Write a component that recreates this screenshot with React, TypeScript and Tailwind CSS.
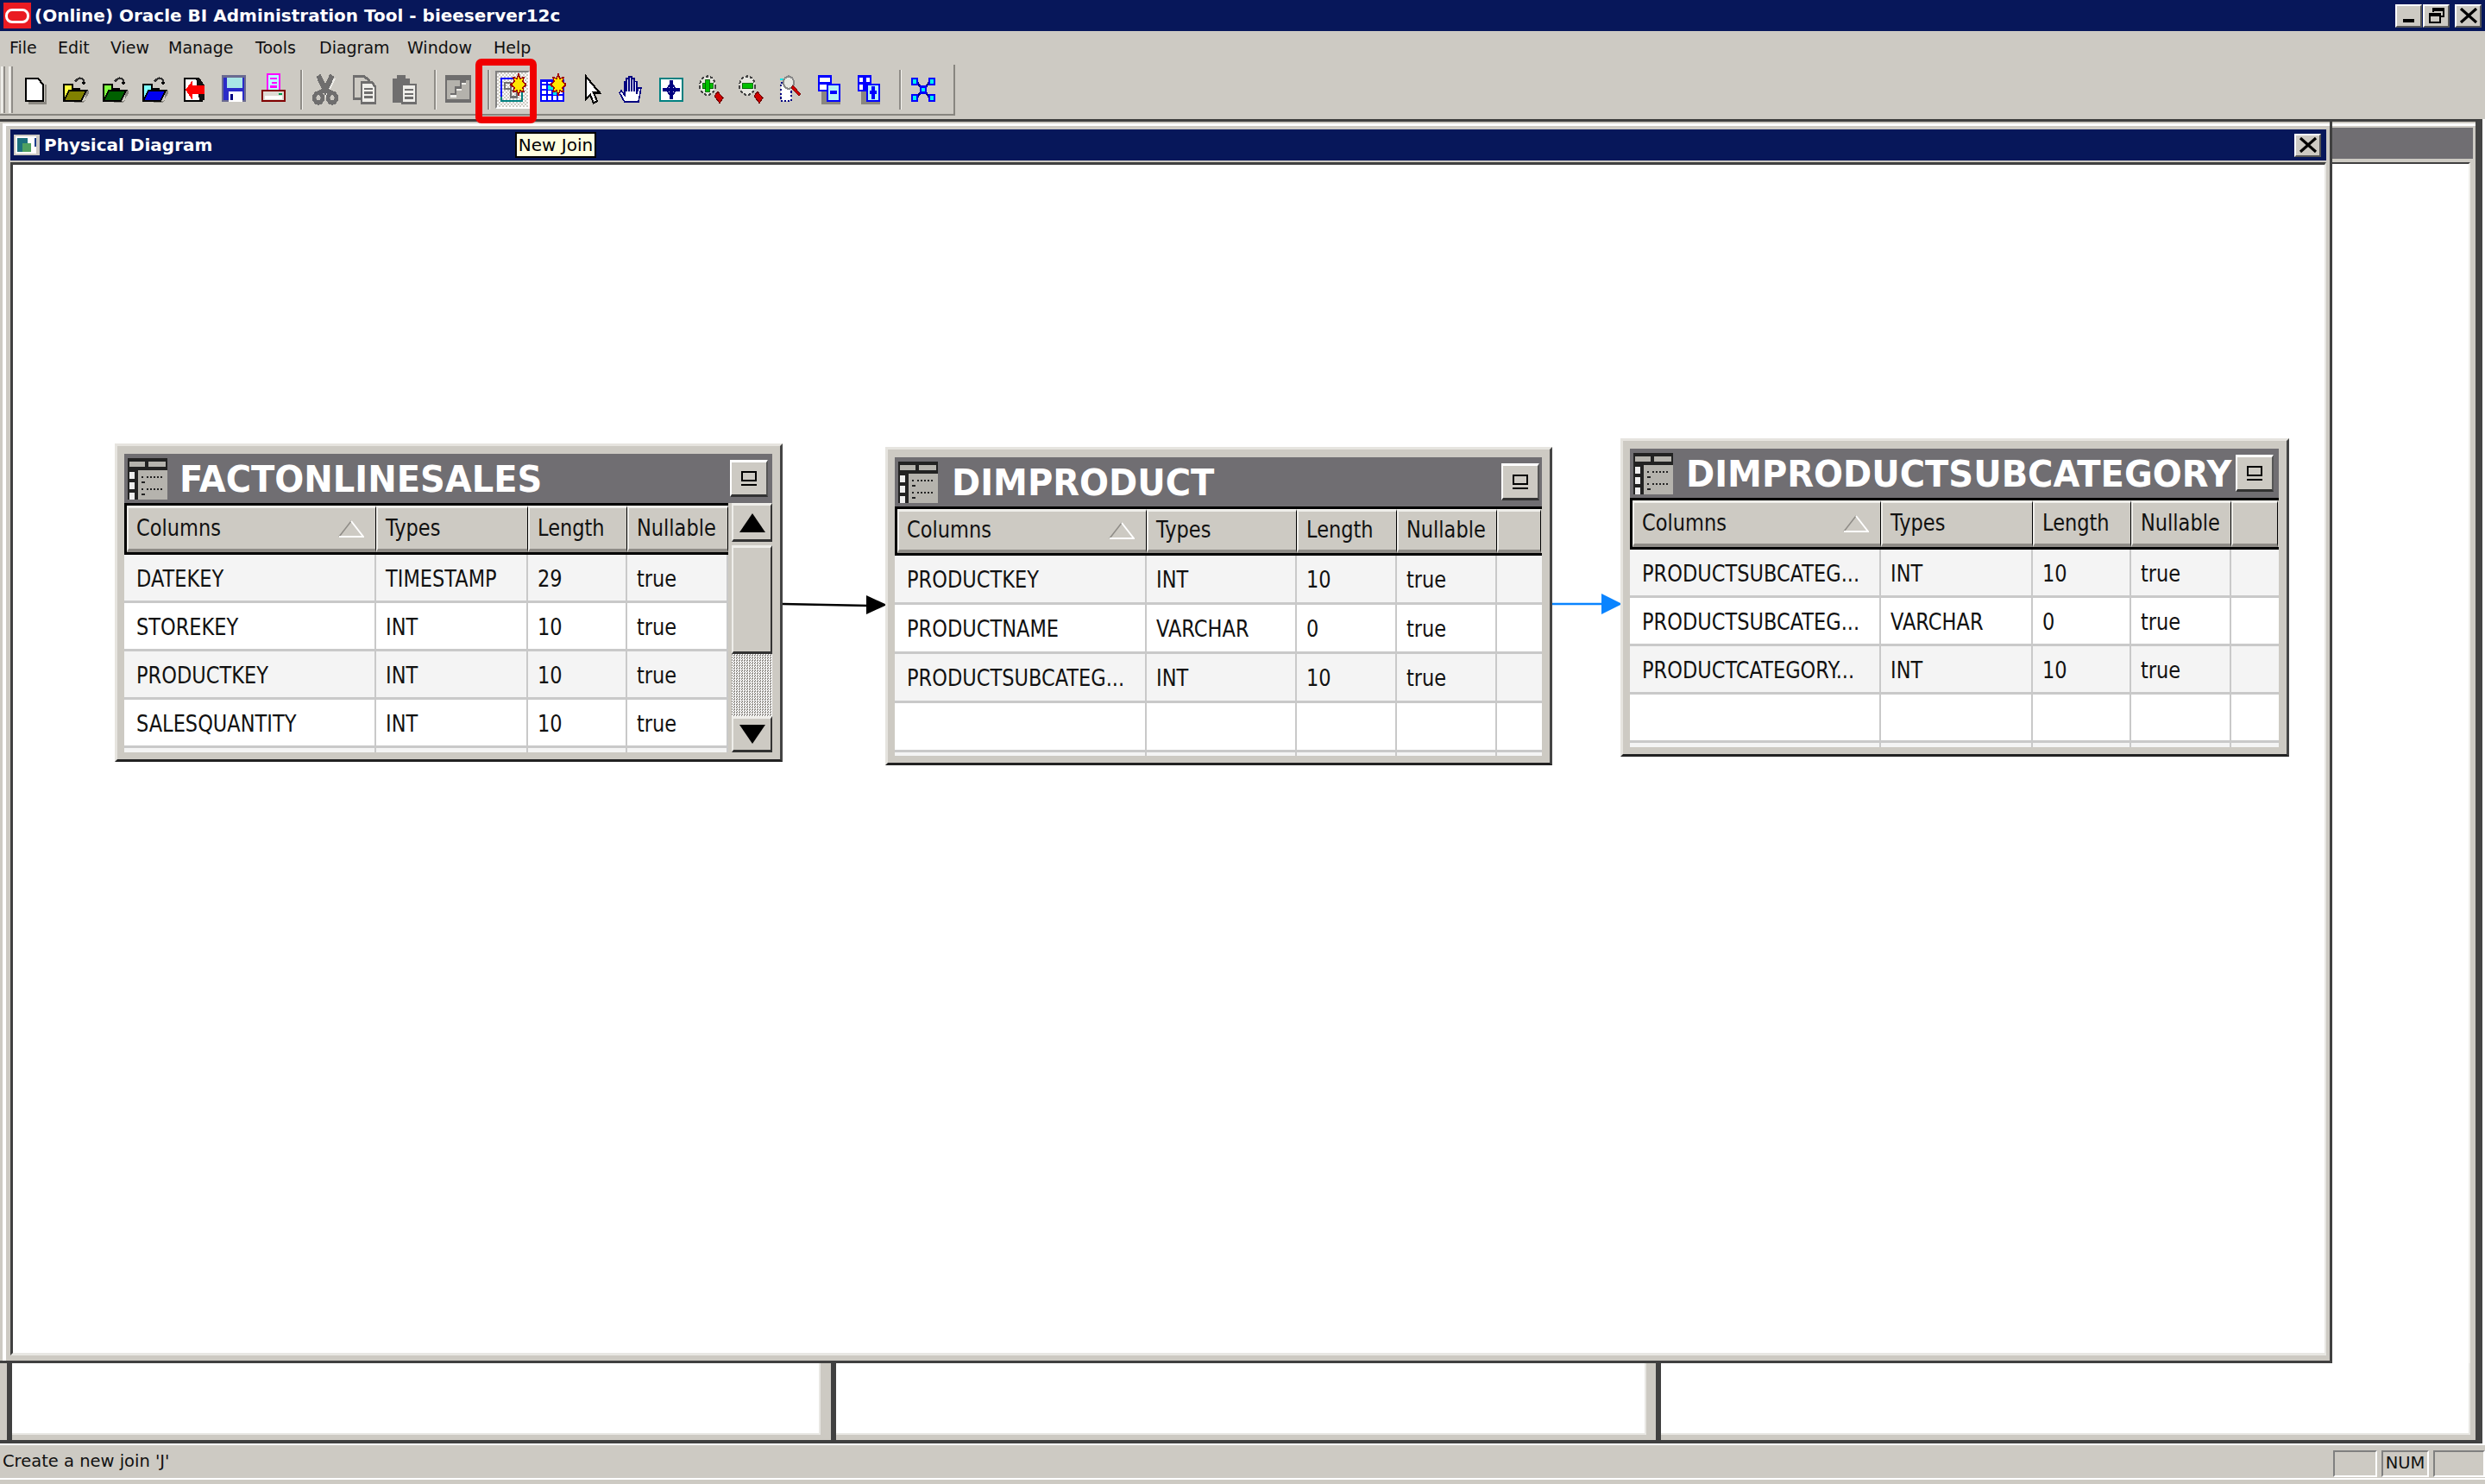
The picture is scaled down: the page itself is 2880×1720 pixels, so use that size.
import type { ReactNode } from "react";

const MENU = [
  { label: "File", cls: "w-[56px]" },
  { label: "Edit", cls: "w-[61px]" },
  { label: "View", cls: "w-[67px]" },
  { label: "Manage", cls: "w-[101px]" },
  { label: "Tools", cls: "w-[74px]" },
  { label: "Diagram", cls: "w-[102px]" },
  { label: "Window", cls: "w-[100px]" },
  { label: "Help", cls: "w-[60px]" },
];

const GRAY = "#6f6e6e";

function Ico({ children }: { children: ReactNode }) {
  return (
    <svg width={32} height={38} viewBox="0 0 16 16" preserveAspectRatio="none" shapeRendering="crispEdges">
      {children}
    </svg>
  );
}

function Btn({ children, active }: { children: ReactNode; active?: boolean }) {
  return (
    <div
      className={
        active
          ? "mx-[3px] flex h-[44px] w-[40px] items-center justify-center border-t-2 border-l-2 border-b-2 border-r-2 border-t-[#808080] border-l-[#808080] border-b-white border-r-white bg-[repeating-conic-gradient(#ffffff_0_25%,#cdcac3_0_50%)] bg-[length:4px_4px]"
          : "flex h-[44px] w-[46px] items-center justify-center"
      }
    >
      {children}
    </div>
  );
}

function Folder({ light, dark }: { light: string; dark: string }) {
  return (
    <Ico>
      <path d="M3 14.5h10l3-5v-1h-2v5z" fill="#8a8780" />
      <path d="M1.5 5.5h5v2h4v6h-9z" fill={light} stroke="#000" />
      <path d="M1.5 13.5l3-5h10l-3 5z" fill={dark} stroke="#000" />
      <path d="M8 4q3-3 5-.5v2" fill="none" stroke="#333" />
      <path d="M11.5 4h3l-1.5 2z" fill="#000" />
    </Ico>
  );
}

function Star() {
  return (
    <path
      d="M11.5 0.5l1 2 2-.5-.5 2 2 1.5-2 1.5.5 2-2-.5-1 2-1-2-2 .5.5-2-2-1.5 2-1.5-.5-2 2 .5z"
      fill="#ffe600"
      stroke="#a00000"
      strokeWidth="0.8"
    />
  );
}

function Magnifier({ sign }: { sign: "+" | "-" }) {
  return (
    <Ico>
      <circle cx="6" cy="6" r="4.5" fill="#e6e6e0" stroke="#444" strokeDasharray="1.5 1" />
      <rect x="3" y="5" width="6" height="2.4" fill="#00c000" stroke="#006000" strokeWidth="0.4" />
      {sign === "+" && <rect x="4.8" y="3" width="2.4" height="6" fill="#00c000" stroke="#006000" strokeWidth="0.4" />}
      <path d="M10 11l2-2 3 3-2 2.5z" fill="#d00000" stroke="#700000" strokeWidth="0.5" />
    </Ico>
  );
}

function Overlap({ sign }: { sign: "+" | "-" }) {
  return (
    <Ico>
      <rect x="3" y="5" width="11" height="10" fill="#8a8780" />
      <rect x="1.5" y="1.5" width="7" height="7" fill="#fff" stroke="#0000ff" />
      <rect x="2" y="4" width="6" height="1.6" fill="#0000ff" />
      {sign === "+" && <rect x="4.2" y="2" width="1.6" height="6" fill="#0000ff" />}
      <rect x="6.5" y="5.5" width="7" height="8" fill="#b8f4f4" stroke="#0000ff" />
      <rect x="8" y="8.5" width="4" height="1.6" fill="#0000ff" />
      {sign === "+" && <rect x="9.2" y="6.5" width="1.6" height="6" fill="#0000ff" />}
    </Ico>
  );
}

function Sep({ cls }: { cls: string }) {
  return <div className={`h-[46px] w-[3px] border-l-2 border-r border-l-[#8f8c87] border-r-[#f3f2ee] ${cls}`} />;
}

function Toolbar() {
  return (
    <div className="flex h-[59px] w-[1107px] items-center border-r-2 border-b-2 border-[#87857f]">
      <div className="ml-[1px] h-[54px] w-[5px] border-l-2 border-r-2 border-l-[#efeeea] border-r-[#8f8c87] bg-[#e4e2dc]" />
      <div className="ml-[4px] mr-[3px] h-[54px] w-[5px] border-l-2 border-r-2 border-l-[#efeeea] border-r-[#8f8c87] bg-[#e4e2dc]" />
      <Btn>
        <Ico>
          <path d="M4 14.5h10v-9" fill="none" stroke="#8a8780" />
          <path d="M2.5 2.5h7l3 3v8h-10z" fill="#fff" stroke="#000" />
        </Ico>
      </Btn>
      <Btn><Folder light="#ffff40" dark="#808000" /></Btn>
      <Btn><Folder light="#80ff40" dark="#006000" /></Btn>
      <Btn><Folder light="#80ffff" dark="#0000f0" /></Btn>
      <Btn>
        <Ico>
          <path d="M2.5 2.5h7l3 3v8h-10z" fill="#fff" stroke="#000" />
          <path d="M9 2h2l3 4v7h-3z" fill="#111" />
          <path d="M3 8l4-4.5v2.5h7v4H7v3z" fill="#ff0000" />
        </Ico>
      </Btn>
      <Btn>
        <Ico>
          <rect x="1.5" y="1.5" width="13" height="12" fill="#2a2ac8" stroke="#6a6a90" />
          <path d="M4 2h9v5H4z" fill="#a9e6e6" />
          <rect x="5" y="9" width="8" height="5" fill="#fff" />
          <rect x="6" y="10" width="1.5" height="3" fill="#000080" />
        </Ico>
      </Btn>
      <Btn>
        <Ico>
          <rect x="4.5" y="0.5" width="7" height="8" fill="#bff" stroke="#ff00ff" />
          <path d="M6 2h4v1H6zM7 4h3v1H7zM6 6h4v1H6z" fill="#ff00ff" />
          <rect x="1.5" y="8.5" width="13" height="5" fill="#dedbd4" stroke="#800000" />
          <rect x="3" y="11" width="10" height="1.5" fill="#fff" />
          <rect x="11" y="9.5" width="2" height="1" fill="#00a050" />
        </Ico>
      </Btn>
      <Sep cls="ml-[8px] mr-[3px]" />
      <Btn>
        <Ico>
          <path d="M4.5 2l4 7 4-7" fill="none" stroke="#efeeea" strokeWidth="3" />
          <path d="M4 1l4 7 4-7" fill="none" stroke={GRAY} strokeWidth="3" />
          <path d="M4.5 9.5l3.5-1.5 3.5 1.5" fill="none" stroke={GRAY} strokeWidth="2.5" />
          <circle cx="4" cy="12" r="2.4" fill="none" stroke={GRAY} strokeWidth="2.2" />
          <circle cx="12" cy="12" r="2.4" fill="none" stroke={GRAY} strokeWidth="2.2" />
        </Ico>
      </Btn>
      <Btn>
        <Ico>
          <path d="M1.5 1.5h6l3 2v9h-9z" fill="#cdcac3" stroke={GRAY} strokeWidth="1.3" />
          <path d="M6 4.5h6l2 2v8H6z" fill="#efeeea" stroke={GRAY} strokeWidth="1.3" />
          <path d="M7.5 7.5h5M7.5 9.5h5M7.5 11.5h5" stroke={GRAY} />
        </Ico>
      </Btn>
      <Btn>
        <Ico>
          <path d="M1 2.5h10v12H1z" fill={GRAY} />
          <path d="M3.5 1h5v2.5h-5z" fill={GRAY} />
          <path d="M6.5 5.5h8v9h-8z" fill="#efeeea" stroke={GRAY} />
          <path d="M8 8h5M8 10h5M8 12h5" stroke={GRAY} />
        </Ico>
      </Btn>
      <Sep cls="ml-[11px] mr-[3px]" />
      <Btn>
        <Ico>
          <rect x="0.5" y="1.5" width="14" height="12" fill="#b4b2ac" stroke={GRAY} strokeWidth="1.4" />
          <rect x="1" y="1.5" width="14" height="2" fill={GRAY} />
          <path d="M3 11h3V8h3V5h3" fill="none" stroke="#efeeea" strokeWidth="1.2" />
          <path d="M3 10h3V7h3V4h3" fill="none" stroke={GRAY} strokeWidth="1" />
        </Ico>
      </Btn>
      <Sep cls="ml-[10px] mr-[3px]" />
      <Btn active>
        <Ico>
          <path d="M1 2.5h12" stroke="#0000ff" />
          <path d="M1.5 2v9.5" stroke="#0000ff" />
          <path d="M13.5 5v8.5H1.5v-2" fill="none" stroke="#008080" strokeWidth="1.2" />
          <rect x="3.5" y="4.5" width="3.5" height="3" fill="none" stroke="#707070" />
          <rect x="7" y="8.5" width="3.5" height="3" fill="none" stroke="#707070" />
          <Star />
        </Ico>
      </Btn>
      <Btn>
        <Ico>
          <rect x="1.5" y="3.5" width="13" height="10" fill="#fff" stroke="#0000ff" />
          <path d="M2 5.5h12M2 8h12M2 10.5h12M5 4v9M8 4v9M11 4v9" stroke="#0000ff" />
          <rect x="5.5" y="6" width="8" height="2" fill="#00e8e8" />
          <rect x="8.5" y="8.5" width="2" height="2" fill="#00e8e8" />
          <Star />
        </Ico>
      </Btn>
      <Btn>
        <Ico>
          <path d="M4.5 1.5v11l2.5-2 2 4 2-1-2-4h3.5z" fill="#fff" stroke="#000" />
        </Ico>
      </Btn>
      <Btn>
        <Ico>
          <path
            d="M4 14L1 9.5l1-1 2 2V4h1v5V2.5h1.5V9V1.5H8V9V2.5h1.5V9V4H11v6l1-3h1.5L12 14z"
            fill="#fff"
            stroke="#000080"
            strokeWidth="0.8"
          />
        </Ico>
      </Btn>
      <Btn>
        <Ico>
          <rect x="1.5" y="2.5" width="13" height="11" fill="#fff" stroke="#008080" />
          <rect x="7.2" y="3.5" width="1.6" height="9" fill="#000080" />
          <rect x="3" y="7.2" width="10" height="1.6" fill="#000080" />
          <circle cx="8" cy="8" r="2.2" fill="none" stroke="#000080" />
        </Ico>
      </Btn>
      <Btn><Magnifier sign="+" /></Btn>
      <Btn><Magnifier sign="-" /></Btn>
      <Btn>
        <Ico>
          <rect x="2.5" y="4.5" width="6" height="9" fill="#fff" stroke="#000080" strokeDasharray="1 1" />
          <rect x="2" y="2.5" width="2" height="1" fill="#00e8e8" />
          <circle cx="7" cy="4.5" r="3" fill="#e6e6e0" stroke="#888" />
          <path d="M9.5 6l4.5 4-1 1-4.5-4z" fill="#d00000" stroke="#700000" strokeWidth="0.4" />
        </Ico>
      </Btn>
      <Btn><Overlap sign="-" /></Btn>
      <Btn><Overlap sign="+" /></Btn>
      <Sep cls="ml-[11px] mr-[2px]" />
      <Btn>
        <Ico>
          <path d="M4 4l8 8M12 4l-8 8" stroke="#000080" strokeWidth="1.2" />
          <g fill="#00f0f0" stroke="#0000ff">
            <rect x="1.5" y="2.5" width="3" height="3" />
            <rect x="11.5" y="2.5" width="3" height="3" />
            <rect x="6.5" y="6.5" width="3" height="3" />
            <rect x="1.5" y="10.5" width="3" height="3" />
            <rect x="11.5" y="10.5" width="3" height="3" />
          </g>
        </Ico>
      </Btn>
    </div>
  );
}

function WinButton({ children, cls = "" }: { children: ReactNode; cls?: string }) {
  return (
    <div
      className={`flex h-[27px] w-[31px] items-center justify-center border-t-2 border-l-2 border-b-2 border-r-2 border-t-white border-l-white border-b-[#555] border-r-[#555] bg-[#cdcac3] ${cls}`}
    >
      {children}
    </div>
  );
}

function CloseGlyph() {
  return (
    <svg width={24} height={18} viewBox="0 0 12 9" preserveAspectRatio="none">
      <path d="M1.5 .5l9 8M10.5 .5l-9 8" stroke="#000" strokeWidth="1.6" />
    </svg>
  );
}

function TableIcon() {
  return (
    <svg width={46} height={48} viewBox="0 0 23 24" preserveAspectRatio="none" shapeRendering="crispEdges">
      <rect width="23" height="24" fill="#222" />
      <rect x="1" y="2" width="9" height="3" fill="#b5b3ad" />
      <rect x="12" y="2" width="10" height="3" fill="#b5b3ad" />
      <rect x="1" y="8" width="3" height="4" fill="#eee" />
      <rect x="1" y="14" width="3" height="4" fill="#eee" />
      <rect x="1" y="20" width="3" height="4" fill="#eee" />
      <rect x="6" y="7" width="17" height="17" fill="#b5b3ad" />
      <path d="M8 11h1M11 11h10M8 18h1M11 18h10" stroke="#222" strokeDasharray="1 1" />
      <path d="M8 14h2M8 21h2" stroke="#222" />
    </svg>
  );
}

function MaxButton({ cls }: { cls: string }) {
  return (
    <div
      className={`absolute flex h-[43px] w-[44px] flex-col items-center justify-center gap-[3px] border-t-[3px] border-l-2 border-b-[3px] border-r-2 border-t-white border-l-white border-b-[#333] border-r-[#555] bg-[#cdcac3] ${cls}`}
    >
      <div className="h-[12px] w-[18px] border-2 border-black" />
      <div className="h-[2px] w-[18px] bg-black" />
    </div>
  );
}

function SortMark() {
  return (
    <svg width={30} height={20} viewBox="0 0 30 20" className="mr-[13px]">
      <path d="M1 19L15 1" stroke="#8f8c87" strokeWidth="1.5" />
      <path d="M15 1l14 18H1" fill="none" stroke="#fff" strokeWidth="2" />
    </svg>
  );
}

function HeaderCell({ children }: { children?: ReactNode }) {
  return (
    <div className="flex items-center justify-between border-t-[3px] border-l-2 border-r border-b-[4px] border-t-[#efeeea] border-l-[#efeeea] border-r-black border-b-[#8f8c87] pl-[9px] text-[#111]">
      {children}
    </div>
  );
}

const Stretch = ({ children }: { children: ReactNode }) => (
  <span className="inline-block scale-y-[1.15] whitespace-nowrap">{children}</span>
);

type Row = [string, string, string, string];

function DiagramTable({
  name,
  rows,
  pos,
  cols,
  nameCls,
  maxCls,
  rowH,
  headH,
  scrollbar,
}: {
  name: string;
  rows: Row[];
  pos: string;
  cols: string;
  nameCls: string;
  maxCls: string;
  rowH: string;
  headH: string;
  scrollbar?: boolean;
}) {
  const padded: (Row | null)[] = [...rows, null, null, null].slice(0, 5);
  return (
    <div
      className={`absolute flex h-[369px] flex-col border-t-[3px] border-l-[3px] border-r-[3px] border-b-[3px] border-t-[#e6e4df] border-l-[#e6e4df] border-r-[#444] border-b-[#222] bg-[#cdcac3] pt-[9px] pr-[9px] pb-[8px] pl-[8px] ${pos}`}
    >
      <div className="relative flex h-[57px] shrink-0 items-center bg-[#706e72] pl-[4px]">
        <TableIcon />
        <span className={`inline-block scale-y-[1.07] whitespace-nowrap text-[40px] font-bold text-white ${nameCls}`}>
          {name}
        </span>
        <MaxButton cls={maxCls} />
      </div>
      <div className="relative flex min-h-0 flex-1 flex-col overflow-hidden text-[22.5px]">
        <div className={`grid shrink-0 border-t-[3px] border-b-[3px] border-l-[3px] border-black ${cols} ${headH}`}>
          <HeaderCell>
            <Stretch>Columns</Stretch>
            <SortMark />
          </HeaderCell>
          <HeaderCell><Stretch>Types</Stretch></HeaderCell>
          <HeaderCell><Stretch>Length</Stretch></HeaderCell>
          <HeaderCell><Stretch>Nullable</Stretch></HeaderCell>
          <HeaderCell />
        </div>
        {padded.map((r, i) => (
          <div
            key={i}
            className={`grid shrink-0 border-b-[3px] border-[#c9c9c9] pl-[3px] text-[#111] ${cols} ${rowH} ${i % 2 === 0 ? "bg-[#f4f4f4]" : "bg-white"}`}
          >
            {[0, 1, 2, 3, 4].map((c) => (
              <div key={c} className="flex items-center overflow-hidden border-r-2 border-[#c9c9c9] pt-[4px] pl-[11px] last:border-r-0">
                {r && c < 4 && <Stretch>{r[c]}</Stretch>}
              </div>
            ))}
          </div>
        ))}
        {scrollbar && <ScrollBar />}
      </div>
    </div>
  );
}

function ScrollBar() {
  const edge =
    "border-t-[3px] border-l-2 border-b-[3px] border-r-2 border-t-[#efeeea] border-l-[#efeeea] border-b-[#333] border-r-[#333] bg-[#cdcac3]";
  return (
    <div className="absolute top-0 right-0 bottom-0 flex w-[51px] flex-col bg-[#cdcac3] pl-[4px]">
      <div className={`flex h-[45px] shrink-0 items-center justify-center ${edge}`}>
        <svg width={30} height={22} viewBox="0 0 30 22"><path d="M15 0l15 22H0z" fill="#000" /></svg>
      </div>
      <div className={`mt-[4px] h-[126px] shrink-0 ${edge}`} />
      <div className="min-h-0 flex-1 bg-[repeating-conic-gradient(#ffffff_0_25%,#8f8c87_0_50%)] bg-[length:3px_3px]" />
      <div className={`flex h-[42px] shrink-0 items-center justify-center ${edge}`}>
        <svg width={30} height={22} viewBox="0 0 30 22"><path d="M15 22L0 0h30z" fill="#000" /></svg>
      </div>
    </div>
  );
}

function Pane({ cls }: { cls: string }) {
  return (
    <div className={`flex shrink-0 flex-col border-l-[6px] border-[#404040] pb-[6px] ${cls}`}>
      <div className="flex-1 border-b-2 border-r-2 border-[#e8e7e3] bg-white" />
    </div>
  );
}

export default function App() {
  return (
    <div className="relative flex h-[1720px] w-[2880px] flex-col overflow-hidden bg-[#cdcac3] font-['DejaVu_Sans','Liberation_Sans',sans-serif] text-black">
      {/* Title bar */}
      <div className="flex h-[36px] shrink-0 items-center bg-[#07175a] pr-[4px]">
        <div className="ml-[4px] flex h-[30px] w-[32px] items-center justify-center bg-[#ea1b22]">
          <div className="h-[17px] w-[28px] rounded-[8px] border-[3px] border-white" />
        </div>
        <span className="ml-[4px] text-[20px] font-bold whitespace-nowrap text-white">
          (Online) Oracle BI Administration Tool - bieeserver12c
        </span>
        <div className="ml-auto flex items-center">
          <WinButton cls="mr-[1px]">
            <div className="mt-[12px] h-[4px] w-[13px] bg-black" />
          </WinButton>
          <WinButton cls="mr-[6px]">
            <svg width={20} height={20} viewBox="0 0 20 20" fill="none" stroke="#000" strokeWidth="2">
              <path d="M6 6V2h12v9h-4" />
              <path d="M6 3.5h12" strokeWidth="3" />
              <rect x="2" y="8" width="12" height="10" />
              <path d="M2 9.5h12" strokeWidth="3" />
            </svg>
          </WinButton>
          <WinButton>
            <CloseGlyph />
          </WinButton>
        </div>
      </div>

      {/* Menu bar */}
      <div className="flex h-[39px] shrink-0 items-center pl-[11px] text-[19px] text-[#111]">
        {MENU.map((m) => (
          <span key={m.label} className={m.cls}>
            {m.label}
          </span>
        ))}
      </div>

      <Toolbar />

      {/* MDI area */}
      <div className="mt-[4px] flex min-h-0 flex-1 flex-col bg-white">
        <div className="mr-[3px] flex flex-1 flex-col border-t-[3px] border-r-[8px] border-b-[4px] border-t-[#404040] border-r-[#444] border-b-[#404040]">
          <div className="flex h-[1439px] shrink-0">
            {/* Child window */}
            <div className="flex w-[2703px] shrink-0 flex-col border-r-[3px] border-b-[3px] border-[#404040] bg-[#cdcac3] pt-[2px] pl-[3px]">
              <div className="flex min-h-0 flex-1 flex-col border-t-[3px] border-l-[4px] border-white pt-[4px] pr-[4px] pl-[5px]">
                <div className="flex h-[36px] shrink-0 items-center bg-[#07175a] pl-[4px]">
                  <svg width={30} height={24} viewBox="0 0 15 12" preserveAspectRatio="none" shapeRendering="crispEdges">
                    <rect width="15" height="12" fill="#cdcac3" />
                    <rect x="1" y="1" width="12" height="10" fill="#fff" />
                    <rect x="2" y="2" width="6" height="8" fill="#1c6f7c" />
                    <rect x="5" y="5" width="5" height="5" fill="#4fa060" />
                    <rect x="12" y="2" width="1" height="5" fill="#1c3f8c" />
                  </svg>
                  <span className="ml-[5px] text-[20px] font-bold whitespace-nowrap text-white">Physical Diagram</span>
                  <WinButton cls="mr-[6px] ml-auto">
                    <CloseGlyph />
                  </WinButton>
                </div>
                <div className="mt-[2px] flex min-h-0 flex-1 border-t-[3px] border-l-[3px] border-r-2 border-b-[3px] border-t-[#404040] border-l-[#404040] border-r-[#e8e7e3] border-b-[#e8e7e3]">
                  {/* Diagram canvas */}
                  <div className="relative flex-1 bg-white">
                    <DiagramTable
                      name="FACTONLINESALES"
                      pos="left-[118px] top-[323px] w-[774px]"
                      cols="grid-cols-[289px_176px_115px_117px_51px]"
                      headH="h-[60px]"
                      rowH="h-[56px]"
                      nameCls="ml-[14px]"
                      maxCls="right-[5px] top-[7px]"
                      scrollbar
                      rows={[
                        ["DATEKEY", "TIMESTAMP", "29", "true"],
                        ["STOREKEY", "INT", "10", "true"],
                        ["PRODUCTKEY", "INT", "10", "true"],
                        ["SALESQUANTITY", "INT", "10", "true"],
                      ]}
                    />
                    <svg width={121} height={24} viewBox="0 0 121 24" className="absolute top-[497px] left-[892px]">
                      <path d="M0 12L100 14" stroke="#000" strokeWidth="2.5" />
                      <path d="M97 2L121 13 97 24z" fill="#000" />
                    </svg>
                    <DiagramTable
                      name="DIMPRODUCT"
                      pos="left-[1011px] top-[327px] w-[773px]"
                      cols="grid-cols-[289px_174px_116px_116px_51px]"
                      headH="h-[57px]"
                      rowH="h-[57px]"
                      nameCls="ml-[16px]"
                      maxCls="right-[3px] top-[7px]"
                      rows={[
                        ["PRODUCTKEY", "INT", "10", "true"],
                        ["PRODUCTNAME", "VARCHAR", "0", "true"],
                        ["PRODUCTSUBCATEG...", "INT", "10", "true"],
                      ]}
                    />
                    <svg width={81} height={24} viewBox="0 0 81 24" className="absolute top-[497px] left-[1784px]">
                      <path d="M0 12H60" stroke="#0a84ff" strokeWidth="2.5" />
                      <path d="M57 0L81 12 57 24z" fill="#0a84ff" />
                    </svg>
                    <DiagramTable
                      name="DIMPRODUCTSUBCATEGORY"
                      pos="left-[1863px] top-[317px] w-[775px]"
                      cols="grid-cols-[288px_176px_114px_116px_54px]"
                      headH="h-[60px]"
                      rowH="h-[56px]"
                      nameCls="ml-[15px]"
                      maxCls="right-[6px] top-[7px]"
                      rows={[
                        ["PRODUCTSUBCATEG...", "INT", "10", "true"],
                        ["PRODUCTSUBCATEG...", "VARCHAR", "0", "true"],
                        ["PRODUCTCATEGORY...", "INT", "10", "true"],
                      ]}
                    />
                  </div>
                </div>
                <div className="h-[6px] shrink-0" />
              </div>
            </div>

            {/* Window behind */}
            <div className="flex min-w-0 flex-1 flex-col bg-[#cdcac3] pt-[2px]">
              <div className="flex flex-1 flex-col border-t-[3px] border-white pt-[2px]">
                <div className="mr-[3px] h-[36px] shrink-0 bg-[#706e72]" />
                <div className="mt-[4px] mr-[6px] flex-1 border-t-[2px] border-r-2 border-t-[#404040] border-r-[#efeeea] bg-white" />
              </div>
            </div>
          </div>

          {/* Bottom panes */}
          <div className="flex min-h-0 flex-1 bg-[#cdcac3]">
            <div className="w-[8px] shrink-0" />
            <Pane cls="w-[955px] pr-[12px]" />
            <Pane cls="w-[956px] pr-[11px]" />
            <Pane cls="flex-1 pr-[6px]" />
          </div>
        </div>
      </div>

      {/* Status bar */}
      <div className="h-[2px] shrink-0 bg-white" />
      <div className="flex h-[38px] shrink-0 items-center text-[19.5px] text-[#111]">
        <span className="ml-[3px]">Create a new join 'J'</span>
        <div className="mt-[4px] ml-auto flex gap-[5px]">
          <div className="h-[31px] w-[51px] border-t-2 border-l-2 border-r-2 border-b-2 border-t-[#808080] border-l-[#808080] border-r-white border-b-white" />
          <div className="flex h-[31px] w-[55px] items-center justify-center border-t-2 border-l-2 border-r-2 border-b-2 border-t-[#808080] border-l-[#808080] border-r-white border-b-white">
            NUM
          </div>
          <div className="h-[31px] w-[60px] border-t-2 border-l-2 border-r-2 border-b-2 border-t-[#808080] border-l-[#808080] border-r-white border-b-white" />
        </div>
      </div>
      <div className="h-[2px] shrink-0 bg-white" />
      <div className="h-[5px] shrink-0" />

      {/* Annotation and tooltip, over the toolbar */}
      <div className="pointer-events-none absolute top-[68px] left-[551px] h-[75px] w-[71px] rounded-[7px] border-[8px] border-[#f00000]" />
      <div className="absolute top-[153px] left-[597px] flex h-[30px] w-[94px] items-center justify-center border-2 border-black bg-[#ffffe1] text-[20px] whitespace-nowrap">
        New Join
      </div>
    </div>
  );
}
